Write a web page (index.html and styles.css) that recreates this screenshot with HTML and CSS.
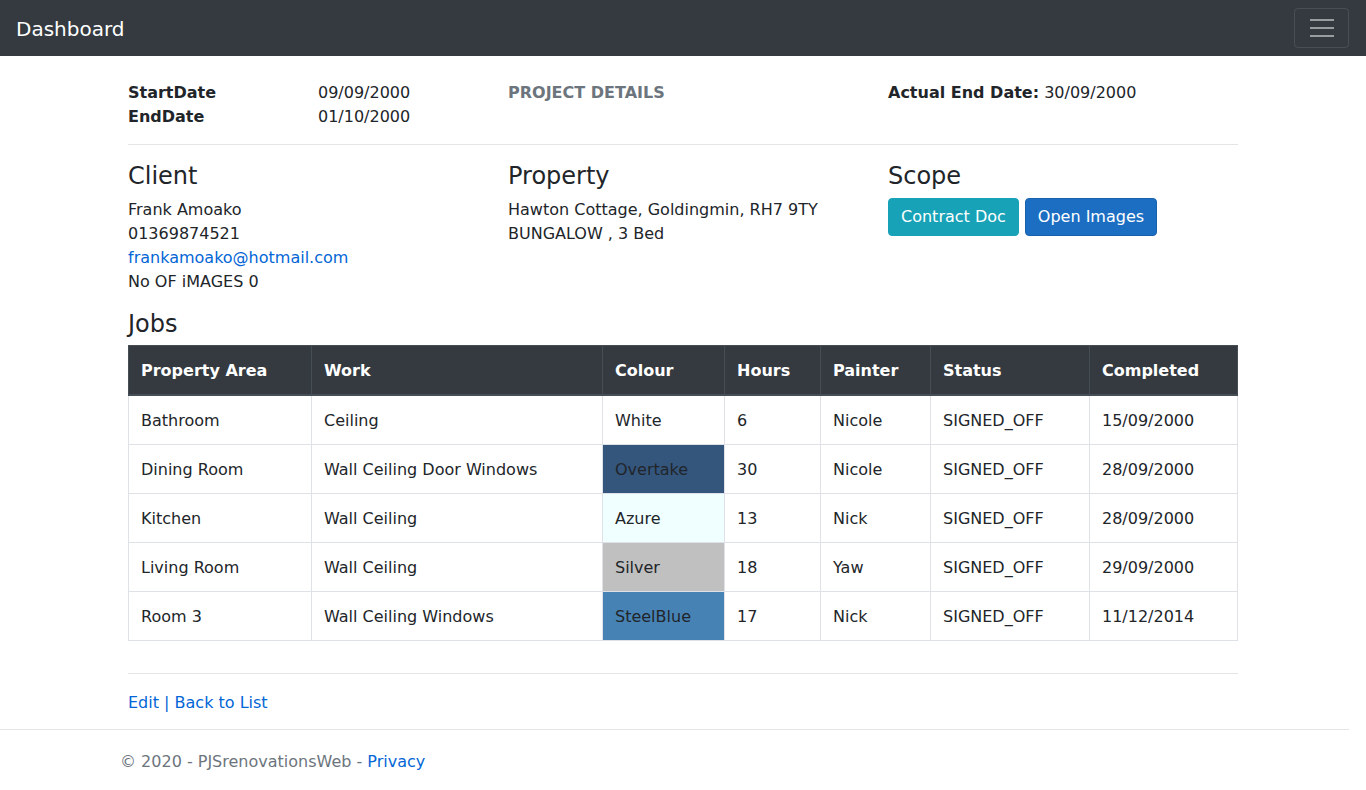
FILE: index.html
```html
<!DOCTYPE html>
<html lang="en">
<head>
<meta charset="utf-8">
<title>Dashboard</title>
<link rel="stylesheet" href="styles.css">
</head>
<body>
<header class="navbar">
  <a class="brand" href="#">Dashboard</a>
  <button class="toggler" type="button" aria-label="Toggle navigation">
    <span class="bar"></span><span class="bar"></span><span class="bar"></span>
  </button>
</header>
<main class="container">
  <div class="row">
    <div class="col">
      <dl class="dates">
        <dt>StartDate</dt><dd>09/09/2000</dd>
        <dt>EndDate</dt><dd>01/10/2000</dd>
      </dl>
    </div>
    <div class="col"><div class="muted-title">PROJECT DETAILS</div></div>
    <div class="col"><div><b>Actual End Date:</b> 30/09/2000</div></div>
  </div>
  <hr class="rule">
  <div class="row">
    <div class="col">
      <h4>Client</h4>
      <div class="lines">
        <div>Frank Amoako</div>
        <div>01369874521</div>
        <div><a href="#">frankamoako@hotmail.com</a></div>
        <div>No OF iMAGES 0</div>
      </div>
    </div>
    <div class="col">
      <h4>Property</h4>
      <div class="lines">
        <div>Hawton Cottage, Goldingmin, RH7 9TY</div>
        <div>BUNGALOW , 3 Bed</div>
      </div>
    </div>
    <div class="col">
      <h4>Scope</h4>
      <div class="buttons">
        <a class="btn btn-info" href="#">Contract Doc</a>
        <a class="btn btn-primary" href="#">Open Images</a>
      </div>
    </div>
  </div>
  <h4 class="jobs-title">Jobs</h4>
  <table class="jobs">
    <thead>
      <tr><th class="c1">Property Area</th><th class="c2">Work</th><th class="c3">Colour</th><th class="c4">Hours</th><th class="c5">Painter</th><th class="c6">Status</th><th>Completed</th></tr>
    </thead>
    <tbody>
      <tr><td>Bathroom</td><td>Ceiling</td><td style="background:#ffffff">White</td><td>6</td><td>Nicole</td><td>SIGNED_OFF</td><td>15/09/2000</td></tr>
      <tr><td>Dining Room</td><td>Wall Ceiling Door Windows</td><td style="background:#34567d">Overtake</td><td>30</td><td>Nicole</td><td>SIGNED_OFF</td><td>28/09/2000</td></tr>
      <tr><td>Kitchen</td><td>Wall Ceiling</td><td style="background:#f0ffff">Azure</td><td>13</td><td>Nick</td><td>SIGNED_OFF</td><td>28/09/2000</td></tr>
      <tr><td>Living Room</td><td>Wall Ceiling</td><td style="background:#c0c0c0">Silver</td><td>18</td><td>Yaw</td><td>SIGNED_OFF</td><td>29/09/2000</td></tr>
      <tr><td>Room 3</td><td>Wall Ceiling Windows</td><td style="background:#4682b4">SteelBlue</td><td>17</td><td>Nick</td><td>SIGNED_OFF</td><td>11/12/2014</td></tr>
    </tbody>
  </table>
  <hr class="rule rule-bottom">
  <div class="actions"><a href="#">Edit</a> | <a href="#">Back to List</a></div>
</main>
<footer class="footer">
  <div class="footer-inner">&copy; 2020 - PJSrenovationsWeb - <a href="#">Privacy</a></div>
</footer>
</body>
</html>
```

FILE: styles.css
```css
* { box-sizing: border-box; }
html, body { margin: 0; padding: 0; }
body {
  font-family: "DejaVu Sans", Verdana, sans-serif;
  font-size: 16px;
  line-height: 24px;
  color: #212529;
  background: #fff;
  width: 1366px;
  height: 790px;
  overflow: hidden;
}
a { color: #0366d6; text-decoration: none; }

.navbar {
  height: 56px;
  background: #343a40;
  display: flex;
  align-items: center;
  justify-content: space-between;
  padding: 0 17px 0 16px;
}
.brand {
  color: #fff;
  font-size: 20px;
  line-height: 30px;
  padding-top: 2px;
}
.toggler {
  width: 55px;
  height: 40px;
  background: transparent;
  border: 1px solid rgba(255,255,255,0.1);
  border-radius: 4px;
  display: flex;
  flex-direction: column;
  justify-content: center;
  align-items: center;
  gap: 6px;
  padding: 0;
}
.toggler .bar {
  display: block;
  width: 24px;
  height: 2px;
  background: rgba(255,255,255,0.5);
}

.container {
  width: 1110px;
  margin: 0 0 0 128px;
  padding-top: 25px;
}
.row {
  display: grid;
  grid-template-columns: 380px 380px 350px;
}
.dates {
  margin: 0;
  display: grid;
  grid-template-columns: 190px 1fr;
}
.dates dt { font-weight: bold; }
.dates dd { margin: 0; }
.muted-title {
  color: #6c757d;
  font-weight: bold;
}
.rule {
  border: 0;
  border-top: 1px solid rgba(0,0,0,0.1);
  margin: 15px 0 17px;
}
h4 {
  margin: 0 0 7px;
  font-size: 24px;
  line-height: 29px;
  font-weight: 500;
}
.buttons { display: flex; gap: 6px; }
.btn {
  display: inline-block;
  color: #fff;
  padding: 6px 12px;
  line-height: 24px;
  border-radius: 4px;
  border: 1px solid transparent;
}
.btn-info { background: #17a2b8; border-color: #17a2b8; }
.btn-primary { background: #1b6ec2; border-color: #1861ac; }

.jobs-title { margin-top: 16px; margin-bottom: 6px; }

.jobs {
  width: 1110px;
  border-collapse: collapse;
}
.jobs th, .jobs td {
  padding: 13px 12px 11px;
  text-align: left;
  vertical-align: top;
  border: 1px solid #dee2e6;
}
.jobs th {
  background: #343a40;
  color: #fff;
  border-color: #454d55;
  border-bottom-width: 2px;
  font-weight: bold;
}
.c1 { width: 183px; }
.c2 { width: 291px; }
.c3 { width: 122px; }
.c4 { width: 96px; }
.c5 { width: 110px; }
.c6 { width: 159px; }

.rule-bottom { margin: 32px 0 17px; }
.actions { color: #0366d6; }

.footer {
  margin-top: 14px;
  width: 1349px;
  border-top: 1px solid #e5e5e5;
}
.footer-inner {
  padding-left: 120px;
  padding-top: 2px;
  line-height: 60px;
  color: #6c757d;
}
```
